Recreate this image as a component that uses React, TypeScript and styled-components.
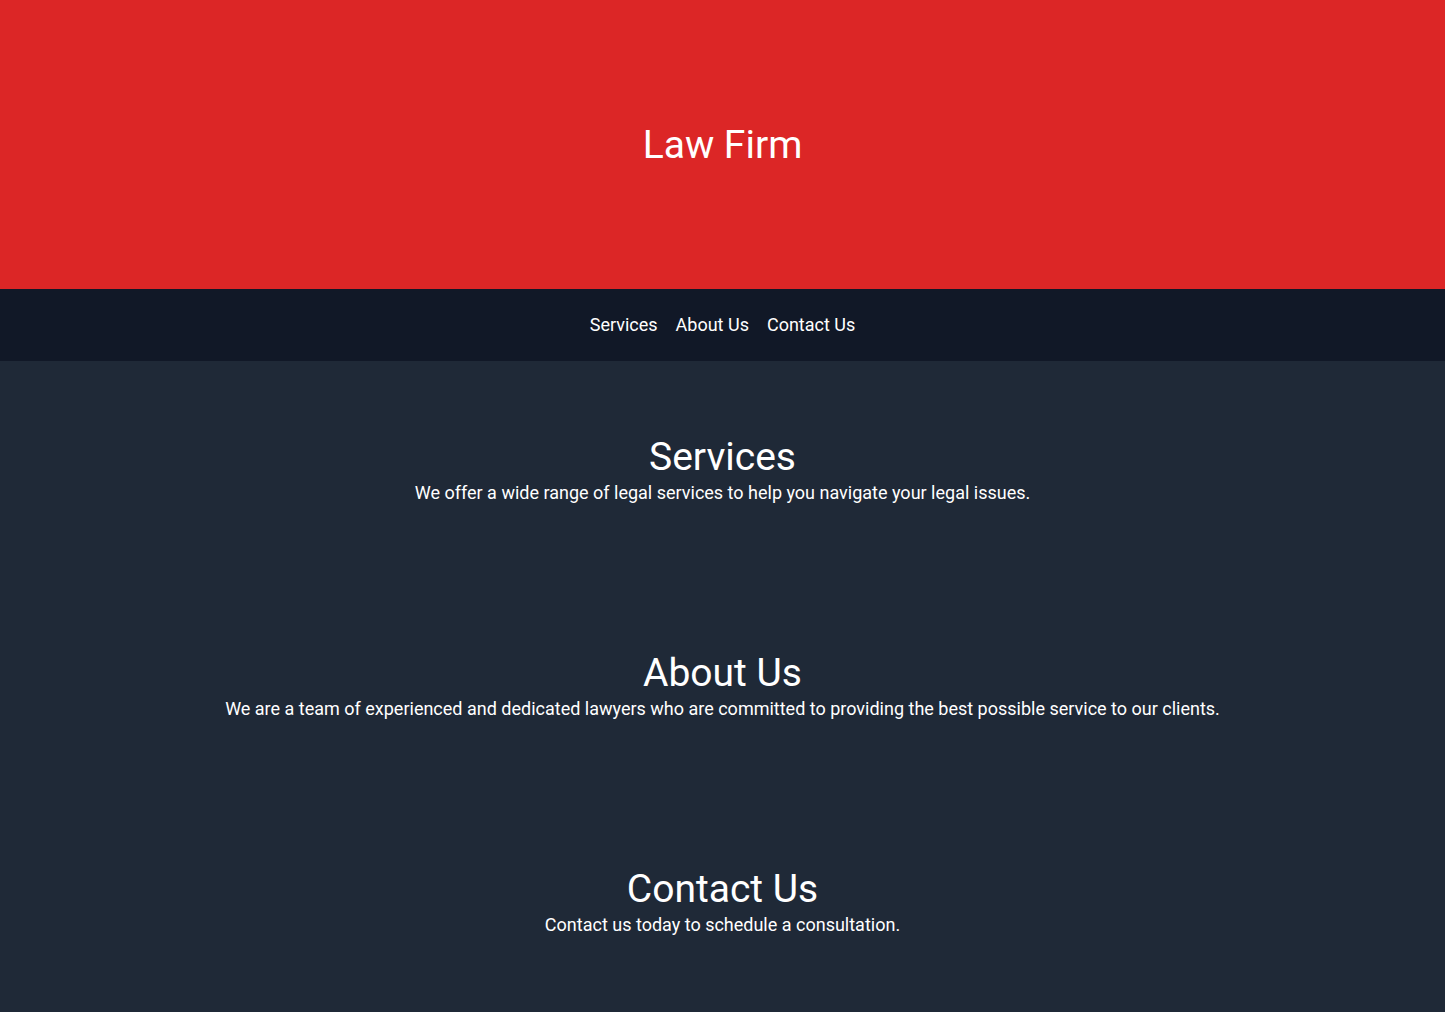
import React from "react"
import styled, { createGlobalStyle } from "styled-components"

const GlobalStyle = createGlobalStyle`
  * { box-sizing: border-box; }
  body {
    margin: 0;
    background: #1f2937;
    font-family: Roboto, "Liberation Sans", Arial, sans-serif;
    color: #ffffff;
  }
`

const Header = styled.header`
  height: 289px;
  background: #dc2626;
  display: flex;
  align-items: center;
  justify-content: center;
`

const Title = styled.h1`
  margin: 0;
  font-size: 39px;
  line-height: 40px;
  font-weight: 400;
`

const Nav = styled.nav`
  height: 72px;
  background: #111827;
  display: flex;
  align-items: center;
  justify-content: center;
  gap: 18px;
`

const NavLink = styled.a`
  color: #ffffff;
  text-decoration: none;
  font-size: 18px;
  line-height: 28px;
`

const Section = styled.section`
  padding: 75px 16px 70px;
  text-align: center;
`

const Heading = styled.h2`
  margin: 0;
  font-size: 39px;
  line-height: 43px;
  font-weight: 400;
`

const Text = styled.p`
  margin: 0;
  font-size: 18px;
  line-height: 28px;
`

const sections = [
  { id: "services", title: "Services", text: "We offer a wide range of legal services to help you navigate your legal issues." },
  { id: "about", title: "About Us", text: "We are a team of experienced and dedicated lawyers who are committed to providing the best possible service to our clients." },
  { id: "contact", title: "Contact Us", text: "Contact us today to schedule a consultation." },
]

export default function App() {
  return (
    <>
      <GlobalStyle />
      <Header>
        <Title>Law Firm</Title>
      </Header>
      <Nav>
        <NavLink href="#services">Services</NavLink>
        <NavLink href="#about">About Us</NavLink>
        <NavLink href="#contact">Contact Us</NavLink>
      </Nav>
      <main>
        {sections.map((s) => (
          <Section key={s.id} id={s.id}>
            <Heading>{s.title}</Heading>
            <Text>{s.text}</Text>
          </Section>
        ))}
      </main>
    </>
  )
}
